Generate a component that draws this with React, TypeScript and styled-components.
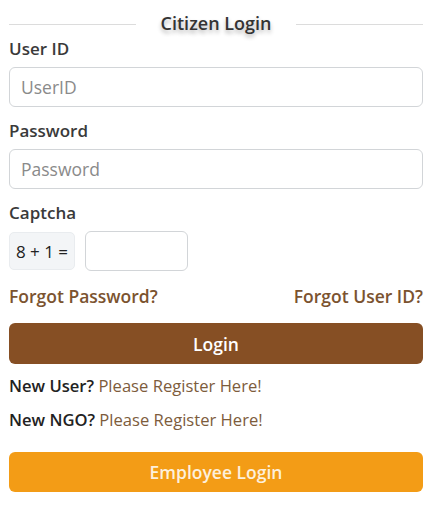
import React from "react";
import styled, { createGlobalStyle } from "styled-components";

const Global = createGlobalStyle`
  html, body { margin: 0; padding: 0; background: #fff; }
  body { font-family: "Open Sans", "Noto Sans", sans-serif; color: #333; }
  * { box-sizing: border-box; }
`;

const Page = styled.div`
  width: 428px;
  padding: 11px 5px 0 9px;
  display: flex;
  flex-direction: column;
`;

const TitleRow = styled.div`
  height: 24px;
  display: flex;
  align-items: center;
  gap: 25px;
  &::before, &::after {
    content: "";
    flex: 1;
    height: 1px;
    margin-top: 3px;
    background: #dcdcdc;
  }
`;

const Title = styled.h2`
  margin: 0;
  font-size: 18px;
  font-weight: 600;
  line-height: 24px;
  color: #333;
  text-shadow: 0 3px 4px rgba(0, 0, 0, 0.3);
`;

const Label = styled.label<{ $top?: number }>`
  display: block;
  margin-top: ${(p) => p.$top ?? 12}px;
  font-size: 17px;
  font-weight: 600;
  line-height: 24px;
  color: #3a3a3a;
`;

const Input = styled.input`
  display: block;
  width: 100%;
  height: 40px;
  margin-top: 6px;
  padding: 0 11px;
  border: 1px solid #d2d5d8;
  border-radius: 6px;
  font-family: "Open Sans", sans-serif;
  font-size: 17.5px;
  color: #333;
  outline: none;
  &::placeholder { color: #8a8a8a; }
`;

const CaptchaRow = styled.div`
  margin-top: 6px;
  display: flex;
  align-items: center;
  gap: 10px;
`;

const CaptchaText = styled.div`
  width: 66px;
  height: 38px;
  display: flex;
  align-items: center;
  justify-content: center;
  background: #f3f5f7;
  border: 1px solid #e9ecef;
  border-radius: 5px;
  font-size: 17px;
  color: #222;
`;

const CaptchaInput = styled.input`
  width: 103px;
  height: 40px;
  border: 1px solid #d2d5d8;
  border-radius: 6px;
  outline: none;
`;

const ForgotRow = styled.div`
  margin-top: 13px;
  display: flex;
  justify-content: space-between;
  line-height: 24px;
`;

const BrownLink = styled.a`
  font-size: 17.5px;
  font-weight: 600;
  color: #7b532f;
  text-decoration: none;
`;

const Button = styled.button<{ $bg: string; $fg: string; $top: number; $h: number }>`
  display: block;
  width: 100%;
  height: ${(p) => p.$h}px;
  margin-top: ${(p) => p.$top}px;
  border: none;
  border-radius: 6px;
  background: ${(p) => p.$bg};
  color: ${(p) => p.$fg};
  font-family: "Open Sans", sans-serif;
  font-size: 17.5px;
  font-weight: 600;
`;

const Note = styled.p<{ $top: number }>`
  margin: ${(p) => p.$top}px 0 0;
  font-size: 16.6px;
  line-height: 24px;
  color: #222;
`;

const Lead = styled.span`
  font-weight: 600;
`;

const RegLink = styled.a`
  font-weight: 400;
  color: #7d5c3c;
  text-decoration: none;
`;

export default function App() {
  return (
    <>
      <Global />
      <Page>
        <TitleRow>
          <Title>Citizen Login</Title>
        </TitleRow>
        <Label $top={2}>User ID</Label>
        <Input placeholder="UserID" />
        <Label>Password</Label>
        <Input type="password" placeholder="Password" />
        <Label>Captcha</Label>
        <CaptchaRow>
          <CaptchaText>8 + 1 =</CaptchaText>
          <CaptchaInput />
        </CaptchaRow>
        <ForgotRow>
          <BrownLink href="#">Forgot Password?</BrownLink>
          <BrownLink href="#">Forgot User ID?</BrownLink>
        </ForgotRow>
        <Button $bg="#864f24" $fg="#ffffff" $top={15} $h={41}>
          Login
        </Button>
        <Note $top={10}>
          <Lead>New User?</Lead> <RegLink href="#">Please Register Here!</RegLink>
        </Note>
        <Note $top={10}>
          <Lead>New NGO?</Lead> <RegLink href="#">Please Register Here!</RegLink>
        </Note>
        <Button $bg="#f39c16" $fg="#fdf0dc" $top={20} $h={40}>
          Employee Login
        </Button>
      </Page>
    </>
  );
}
